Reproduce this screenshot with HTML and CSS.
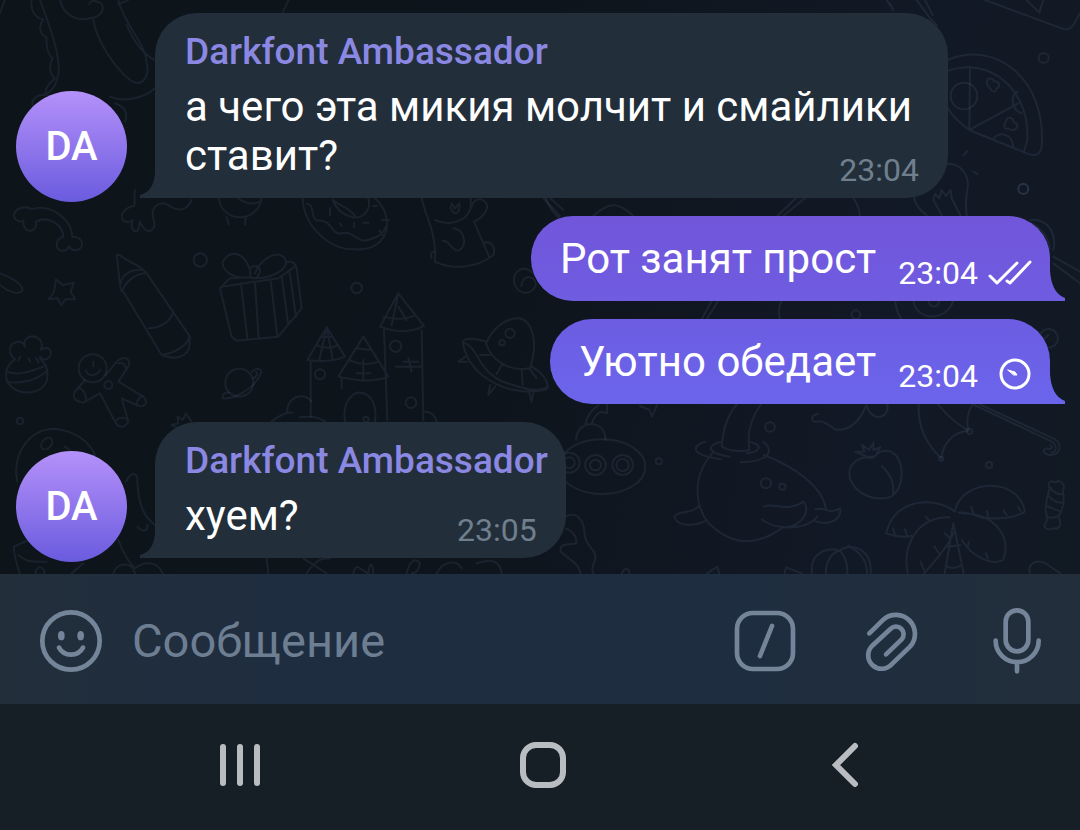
FILE: index.html
```
<!DOCTYPE html>
<html lang="ru">
<head>
  <meta charset="UTF-8">
  <meta name="viewport" content="width=device-width, initial-scale=1.0">
  <title>Чат</title>
  <link rel="stylesheet" href="styles.css">
</head>
<body>

<main class="chat">
  <!-- wallpaper -->
  <svg class="wallpaper" viewBox="0 0 1080 574" preserveAspectRatio="xMidYMid slice" aria-hidden="true">
    <!-- top left: beads, carrot -->
    <g transform="scale(.3333)">
      <path d="M95 0C90 30 105 55 130 58M120 0C150 80 190 190 172 235C165 265 150 280 130 285M130 58C112 80 122 108 140 112C138 140 145 165 158 175C145 200 150 225 165 235C150 250 130 265 140 285C110 280 90 300 100 320M0 40L14 0"/>
      <path d="M180 0C190 45 230 65 270 55C300 52 315 30 305 12C290 0 270 0 268 12M280 60C290 120 340 200 390 240C425 265 450 230 440 190C438 130 370 70 355 0M355 12L385 0M380 75C400 120 430 165 465 180M330 290C370 308 430 295 465 265M345 310C375 320 385 340 375 365"/>
      <path d="M848 38L866 0"/>
    </g>
    <!-- left: rainbow, pen, gift, star, cake, gingerbread man, planet -->
    <g transform="translate(0 190) scale(.3333)">
      <path d="M95 58C75 45 45 55 42 75C42 92 60 98 70 92C68 110 78 124 90 122C105 122 110 108 108 95C145 75 190 105 190 140C170 145 165 165 175 178C190 188 205 178 207 168C215 185 235 185 245 170C250 150 235 138 217 142C215 85 150 40 95 58Z"/>
      <path d="M405 0C400 20 408 35 402 48C380 50 362 70 366 85C372 100 388 98 398 90C390 110 398 125 410 124C420 118 415 105 420 95C430 120 445 128 455 120C470 110 462 95 460 85C450 50 480 30 505 45C530 65 560 65 575 30"/>
      <path d="M656 24C660 60 690 82 720 82C755 82 782 55 785 24M715 24C735 42 760 45 780 35M680 82L686 104M737 82L735 104"/>
      <path d="M350 195L362 300L372 308L485 495C520 510 560 505 568 470L570 440L440 250L430 240C410 220 380 215 360 195ZM362 280C365 255 395 235 425 240M368 300C380 270 410 250 440 250M445 415C480 415 510 395 518 370M485 495C520 490 560 470 568 440"/>
      <circle cx="601" cy="210" r="20"/><circle cx="60" cy="693" r="10"/>
      <path d="M660 295L690 265L750 262M660 295L695 440L710 452L835 440L905 355L890 235C885 215 870 212 858 218M665 290L835 265L885 230M750 262C700 270 665 240 668 215C690 180 730 180 750 240M765 250C780 210 830 175 855 205C870 235 820 265 765 265M750 235C760 225 775 225 780 238C780 260 765 270 752 262ZM723 280L742 445M765 275L776 445M812 270L832 440M845 258L865 405M868 240L888 380"/>
      <path d="M0 250C30 260 65 280 68 300C60 315 30 310 0 285"/>
      <path d="M168 268L188 285L222 278L212 305L226 328L196 328L184 346L173 325L146 328L162 306Z"/>
      <path d="M45 508C25 495 25 465 45 458C60 450 72 460 75 470C65 440 100 430 120 450C128 460 125 475 122 480C145 465 155 480 152 495C145 512 130 512 120 500M45 508C10 530 10 575 40 595C80 620 135 605 142 565C145 535 135 520 120 505M20 545C60 560 100 540 130 530M20 575C70 585 115 565 138 545M60 500l-5 12M85 505l6 12M108 505l8 12"/>
      <circle cx="278" cy="535" r="42"/><circle cx="325" cy="585" r="12"/>
      <path d="M318 555L350 515C370 495 390 505 388 525L355 575L430 620C450 640 430 655 410 645L365 625L385 695C375 715 355 715 345 695L300 610L250 638C225 635 215 620 225 605L255 570M355 520C365 515 380 525 378 540M410 645C410 630 420 620 430 618M345 695C355 682 370 680 382 688M235 590C250 600 260 615 258 630M258 540C260 560 290 560 300 540M280 515v15"/>
      <circle cx="718" cy="578" r="42"/>
      <path d="M755 545C775 530 790 540 782 552C765 595 700 630 668 625C665 615 675 605 688 608M760 565C770 560 775 550 768 546"/>
      <path d="M530 712L515 705L535 700L533 680L548 690L558 670L575 695"/>
      <path d="M862 670C855 625 910 600 935 635M815 695C840 675 860 665 878 668"/>
    </g>
    <!-- donut, koala, castle, ufo -->
    <g transform="translate(300 180) scale(.3333)">
      <path d="M8 54C10 130 80 210 165 208C195 210 220 205 240 185C275 150 265 90 225 54M20 72C45 70 30 115 52 122C100 118 90 165 125 160C160 150 170 190 205 180C230 170 245 170 258 140M98 58C105 80 125 105 160 112C190 115 215 90 205 54M100 62C125 80 150 85 165 108M245 120h22M238 152l12 16M190 128h16M220 78h12M90 85v20M162 128v14M120 130l5 8"/>
      <path d="M365 54C375 110 410 150 405 245C455 270 530 265 580 225C590 195 565 180 550 190L522 125C555 110 570 80 555 65C540 50 520 60 515 80M405 120C450 140 500 125 512 85V54M550 190L568 232M395 235C390 215 400 210 407 220M460 145C500 150 500 205 475 212C450 210 450 180 428 182M455 70L465 85L478 70C480 90 475 100 465 100C455 95 450 85 455 70Z"/>
      <circle cx="170" cy="324" r="16"/>
      <path d="M22 540L80 442L135 530C100 545 60 545 22 540ZM32 545V710M125 595V625M115 590L190 470L265 590C210 610 160 600 115 590ZM240 440L295 340L372 438C330 460 280 455 240 440ZM252 450L262 720M365 450L370 720M48 495C70 505 95 505 115 495M62 470L98 472M80 442L98 538M80 442L58 540M148 540C180 555 210 555 238 545M168 505L215 510M190 540V598M170 580H212M250 410C280 418 320 420 345 405M295 340L275 435M295 380L320 420M288 560H362M310 545H355M325 535L335 575"/>
      <path d="M135 724C125 665 160 635 182 638C215 640 232 680 225 724M0 712C30 708 55 710 75 724M375 695C395 695 405 705 410 724"/>
      <circle cx="60" cy="583" r="15"/><circle cx="287" cy="499" r="17"/><circle cx="333" cy="668" r="16"/><circle cx="198" cy="718" r="8"/>
      <path d="M558 490C580 440 620 415 655 415C700 420 715 490 690 565C630 575 575 545 558 490ZM558 485C530 475 490 470 488 488C510 600 640 655 740 628C750 610 730 580 695 560M490 488C540 500 530 590 640 615C680 630 720 635 745 620M540 525H570M608 550L590 582M665 568L668 615M690 568L710 595M500 528L475 545L502 545M570 615L565 645L585 620M688 640L695 665L700 640"/>
      <circle cx="630" cy="460" r="14"/><circle cx="606" cy="488" r="8"/>
      <path d="M700 280C670 250 640 275 642 305C650 345 695 350 708 315C705 285 670 280 664 318M738 54C745 80 765 105 780 115"/>
    </g>
    <!-- pizza, bulb -->
    <g transform="translate(880) scale(.3333)">
      <path d="M204 180C340 120 500 230 485 440C480 470 460 468 440 460L268 390C240 370 215 345 204 325M204 212C320 170 450 260 442 420L432 455M270 200L268 390L415 310M340 418C350 395 395 395 400 440M425 340C395 330 390 290 412 275"/>
      <circle cx="252" cy="288" r="40"/><circle cx="491" cy="174" r="15"/><circle cx="430" cy="567" r="15"/>
      <path d="M322 240C315 255 330 260 332 268C340 282 350 272 350 265C365 260 355 240 342 245C340 235 325 232 322 240ZM380 360C375 370 368 375 375 385C390 385 395 395 405 388C418 380 412 368 402 368C400 350 380 350 380 360Z"/>
      <path d="M315 0L545 85C560 92 575 85 580 75L600 40M440 0L478 38L490 0M262 453L250 466M280 515L292 522M204 492C245 490 270 530 262 570C255 600 258 625 260 648M102 590C105 620 125 635 140 645M185 645L160 600L165 582L178 595L185 570L198 588L212 570L215 595L242 648M20 0L40 30M40 30L30 10M110 0L150 55L170 75M135 0L158 45"/>
    </g>
    <!-- right side between the outgoing messages -->
    <g transform="translate(720 180) scale(.3333)">
      <path d="M172 108L228 54M190 108L255 54M400 54C415 75 418 90 420 108M930 120C985 115 1010 160 1000 210M935 130C975 150 985 180 990 205M1000 230L1080 275M1000 250L1080 310M185 362C175 380 175 400 180 418M525 362C528 385 535 405 545 418M580 362C590 425 680 425 700 362M625 362C630 385 655 385 658 362M-25 362L-55 418M-5 362L-40 418"/>
      <circle cx="910" cy="26" r="15"/><circle cx="408" cy="404" r="13"/><circle cx="986" cy="475" r="28"/><path d="M975 475L985 465"/>
      <path d="M-530 54L-480 108M-510 54L-470 90M-380 108C-330 60 -300 70 -260 108"/>
    </g>
    <!-- bottom right: submarine, whale, peach, palm, umbrella, candy -->
    <g transform="translate(540 400) scale(.3444 .3333)">
      <ellipse cx="180" cy="200" rx="126" ry="82"/>
      <circle cx="85" cy="188" r="30"/><circle cx="85" cy="188" r="16"/><circle cx="161" cy="195" r="30"/><circle cx="161" cy="195" r="16"/><circle cx="240" cy="195" r="30"/><circle cx="240" cy="195" r="18"/>
      <path d="M105 120C105 85 130 72 150 72C178 74 190 95 190 120M132 72C135 50 150 30 170 15M150 72C155 55 165 40 178 35L195 40V12M290 18L318 30L325 50L340 15"/>
      <circle cx="345" cy="184" r="9"/><circle cx="668" cy="81" r="14"/><circle cx="1304" cy="195" r="9"/>
      <path d="M572 12C540 50 530 100 528 140C550 155 590 155 608 150C600 100 615 50 642 12M528 125C480 135 485 160 550 170M608 125C650 135 640 155 600 160M480 125C435 140 440 165 525 178M648 125C680 150 670 185 582 187M500 160C440 230 450 320 490 370C570 450 640 430 705 382C760 385 790 370 805 350M650 165C740 200 820 260 830 325M462 318C440 345 400 330 390 350C395 380 450 380 482 362M800 328C830 320 835 345 872 325C875 360 840 380 795 362M650 320C680 305 710 340 765 305C785 330 765 375 715 382C690 380 660 375 645 358"/>
      <circle cx="656" cy="250" r="15"/><circle cx="704" cy="260" r="9"/>
      <path d="M965 175C925 165 890 195 900 235C920 290 980 305 1020 290C1060 260 1060 180 1020 155C1000 148 985 155 975 165M992 198C1020 225 1030 255 1025 285M950 170L915 155L942 155L935 135L955 150L968 128L968 150L988 142L972 170Z"/>
      <path d="M808 42C780 45 790 70 805 65C820 60 840 75 855 88C900 95 930 60 948 15C955 45 980 60 1000 45C1010 35 1010 20 1008 12"/>
      <path d="M1100 12C1095 80 1120 130 1165 175C1170 130 1200 95 1245 92C1235 65 1245 30 1255 15M1155 12C1180 45 1215 75 1245 92M1255 12L1480 122C1500 130 1505 155 1485 158M1275 12L1490 115C1520 130 1510 165 1485 165C1465 165 1455 150 1470 145C1485 150 1490 145 1482 135"/>
      <circle cx="1247" cy="94" r="8"/><circle cx="1165" cy="176" r="6"/>
      <path d="M1205 335C1150 290 1030 290 1005 400C1030 410 1055 412 1080 408M1205 330C1230 235 1390 230 1408 335C1370 360 1290 360 1262 345C1245 340 1230 335 1215 338M1190 352C1100 350 1050 430 1068 520M1225 340C1320 340 1370 410 1345 480C1310 500 1250 465 1225 420M1200 370L1175 520M1200 370L1230 520M1200 400C1180 450 1140 490 1115 520M1185 440L1220 435M1183 500C1200 510 1215 500 1225 495M1145 440L1162 465M1105 485L1115 510M1175 400L1190 415M1245 425L1242 440M1295 460L1300 475M1252 320L1260 345M1298 332L1300 348M1345 330L1355 345M1388 320L1395 332M1120 350L1130 362M1060 388L1065 405M1025 385L1030 402"/>
      <path d="M1480 265C1470 245 1485 240 1495 248C1510 235 1528 255 1518 272C1525 300 1518 330 1505 350C1515 370 1510 390 1490 385C1475 392 1458 385 1468 368C1480 350 1470 355 1468 330C1470 300 1475 280 1480 265M1482 262C1490 280 1510 285 1520 282M1478 290C1490 305 1510 310 1520 308M1472 318C1485 325 1500 330 1512 335M1470 350C1485 355 1500 352 1508 345"/>
      <path d="M790 520C780 450 850 440 870 452C900 425 965 445 960 520M830 520C830 480 850 455 870 452C885 465 895 495 892 520M895 438C930 455 950 485 950 520M75 350C110 330 130 365 130 410C140 450 165 445 160 480C150 500 150 510 155 520M75 385C90 390 110 410 105 430C80 435 55 430 60 455C100 490 110 490 118 520M238 520C245 500 260 505 260 520M485 520L515 500L520 520M710 520L715 502L760 520M1422 520C1415 485 1450 475 1475 495L1510 520"/>
    </g>
    <!-- bottom left: balloon, leaf, boots -->
    <g transform="translate(0 410) scale(.3333)">
      <path d="M52 215C35 130 90 55 165 57C230 62 270 100 285 135M378 215C395 180 415 190 412 215C415 280 430 320 465 345M412 350C430 370 445 360 442 345M85 390L42 410C40 440 55 470 60 495M55 435C85 460 100 455 140 455M355 390C370 430 390 460 405 475C430 455 470 450 488 490M340 490C350 455 400 455 405 490M215 490L250 460M195 110L210 120"/>
      <ellipse cx="140" cy="101" rx="20" ry="14" transform="rotate(-50 140 101)"/><circle cx="120" cy="485" r="13"/>
      <path d="M800 445L805 490M920 490C950 445 970 445 990 445M910 445L980 490M1060 490C1070 450 1085 485 1105 490C1110 450 1120 460 1120 490M1220 490C1230 445 1250 445 1260 460C1255 490 1240 490 1235 490M1310 490C1330 450 1370 450 1385 475M1430 460C1470 445 1500 450 1505 490"/>
    </g>
  </svg>

  <article class="row row-in">
    <div class="avatar">DA</div>
    <div class="bubble bubble-in">
      <h2 class="sender">Darkfont Ambassador</h2>
      <p class="text">а чего эта микия молчит и смайлики ставит?<time class="time">23:04</time></p>
      <svg class="tail" viewBox="0 0 15 30"><path d="M15 5C14 17 10 24 0 27V30H15Z"/></svg>
    </div>
  </article>

  <article class="row row-out">
    <div class="bubble bubble-out">
      <p class="text">Рот занят прост</p>
      <div class="meta">
        <time>23:04</time>
        <svg class="status" viewBox="0 0 44 38" role="img" aria-label="Прочитано"><path d="M2 22L9 29L29 9M19 27L22 29L42 8"/></svg>
      </div>
      <svg class="tail" viewBox="0 0 15 30"><path d="M0 0C1 13 5 23 15 27V30H0Z"/></svg>
    </div>
  </article>

  <article class="row row-out">
    <div class="bubble bubble-out bubble-last">
      <p class="text">Уютно обедает</p>
      <div class="meta">
        <time>23:04</time>
        <svg class="status" viewBox="0 0 44 38" role="img" aria-label="Отправляется"><circle cx="27" cy="17" r="14"/><path class="hand" d="M20 13L27 15L29 18L26 18Z"/></svg>
      </div>
      <svg class="tail" viewBox="0 0 15 30"><path d="M0 0C1 13 5 23 15 27V30H0Z"/></svg>
    </div>
  </article>

  <article class="row row-in">
    <div class="avatar">DA</div>
    <div class="bubble bubble-in">
      <h2 class="sender">Darkfont Ambassador</h2>
      <p class="text">хуем?<time class="time">23:05</time></p>
      <svg class="tail" viewBox="0 0 15 30"><path d="M15 5C14 17 10 24 0 27V30H15Z"/></svg>
    </div>
  </article>
</main>

<form class="composer">
  <button type="button" class="icon-btn" aria-label="Эмодзи">
    <svg viewBox="0 0 186 186"><circle cx="93" cy="93" r="86"/><path d="M57 113C72 141 114 141 129 113"/><ellipse class="eye" cx="64" cy="77" rx="10" ry="14"/><ellipse class="eye" cx="122" cy="77" rx="10" ry="14"/></svg>
  </button>
  <input class="message-input" type="text" placeholder="Сообщение" aria-label="Сообщение">
  <button type="button" class="icon-btn" aria-label="Команды">
    <svg viewBox="0 0 186 186"><rect x="9" y="9" width="168" height="168" rx="48"/><path d="M114 48L78 138"/></svg>
  </button>
  <button type="button" class="icon-btn" aria-label="Прикрепить">
    <svg viewBox="0 0 186 186"><path d="M28 70L70 29A57 57 0 0 1 150 110L94 164A40 40 0 0 1 36 108L92 56A23 23 0 0 1 125 88L78 133"/></svg>
  </button>
  <button type="button" class="icon-btn" aria-label="Голосовое сообщение">
    <svg viewBox="0 0 186 186"><rect x="59" y="1" width="68" height="123" rx="34"/><path d="M29 92A64 64 0 0 0 158 92M93 157V184"/></svg>
  </button>
</form>

<nav class="navbar">
  <button type="button" class="nav-btn" aria-label="Недавние"><svg viewBox="0 0 62 62"><path d="M14 13V49M31 13V49M48 13V49"/></svg></button>
  <button type="button" class="nav-btn" aria-label="Домой"><svg viewBox="0 0 62 62"><rect x="11" y="11" width="40" height="40" rx="13"/></svg></button>
  <button type="button" class="nav-btn" aria-label="Назад"><svg viewBox="0 0 62 62"><path d="M40 12L21 31L40 50"/></svg></button>
</nav>

</body>
</html>
```
FILE: styles.css
```
*{
  box-sizing: border-box;
  margin: 0;
  padding: 0;
}
body{
  min-height: 100vh;
  display: flex;
  flex-direction: column;
  background: #161e26;
  font-family: Roboto, "Noto Sans", sans-serif;
  color: #fff;
}
button{
  background: none;
  border: none;
  cursor: pointer;
}

/* messages */
.chat{
  position: relative;
  flex: 1;
  display: flex;
  flex-direction: column;
  justify-content: flex-end;
  gap: 18px;
  padding: 13px 30px 16px 16px;
  overflow: hidden;
  background: linear-gradient(100deg, #0d141a 0%, #0e141b 45%, #121926 80%, #111923 100%);
}
.wallpaper{
  position: absolute;
  inset: 0;
  width: 100%;
  height: 100%;
  fill: none;
  stroke: rgba(130, 155, 195, 0.11);
  stroke-width: 2;
  stroke-linecap: round;
  stroke-linejoin: round;
}
.wallpaper *{
  vector-effect: non-scaling-stroke;
}
.row{
  position: relative;
  display: flex;
  align-items: flex-end;
}
.row-in{
  gap: 28px;
  padding-right: 102px;
}
.row-out{
  justify-content: flex-end;
}
.avatar{
  flex: none;
  width: 111px;
  height: 111px;
  margin-bottom: -4px;
  border-radius: 50%;
  background: linear-gradient(#b591fa, #6a5bde);
  font-size: 40px;
  font-weight: 500;
  line-height: 111px;
  text-align: center;
}
.bubble{
  position: relative;
  padding: 18px 18px 18px 30px;
  border-radius: 42px;
}
.bubble-in{
  padding-top: 17px;
  border-bottom-left-radius: 0;
  background: #222e39;
  color: #222e39;
}
.bubble-out{
  display: flex;
  gap: 22px;
  padding-left: 29px;
  border-bottom-right-radius: 0;
  background: linear-gradient(#7156da, #6f5ce1);
  color: #6f5ce1;
}
.bubble-last{
  background: linear-gradient(#6c5de2, #6b65ec);
  color: #6b65ec;
}
.tail{
  position: absolute;
  bottom: 0;
  width: 15px;
  height: 30px;
  fill: currentColor;
}
.bubble-in .tail{
  right: 100%;
}
.bubble-out .tail{
  left: 100%;
}
.sender{
  margin-bottom: 8px;
  font-size: 37px;
  font-weight: 500;
  line-height: 44px;
  color: #8b88e3;
}
.text{
  font-size: 42px;
  line-height: 49px;
  color: #fff;
}
.time{
  float: right;
  margin: 20px 11px -20px 0;
  font-size: 32px;
  line-height: 38px;
  color: #6f7f8d;
}
.meta{
  display: flex;
  gap: 10px;
  margin: 20px 0 -20px;
  font-size: 32px;
  line-height: 38px;
  color: #fff;
}
.status{
  width: 44px;
  height: 38px;
  fill: none;
  stroke: #fff;
  stroke-width: 3;
  stroke-linecap: round;
  stroke-linejoin: round;
}
.status .hand{
  fill: #fff;
  stroke-width: 1;
}

/* message field */
.composer{
  display: flex;
  align-items: center;
  gap: 64px;
  height: 130px;
  padding: 4px 32px 0 40px;
  background: linear-gradient(90deg, #222e3a, #1f2d40 25%, #1f2d40 70%, #222e3a);
}
.icon-btn{
  flex: none;
  width: 62px;
  height: 62px;
}
.icon-btn svg{
  display: block;
  width: 62px;
  height: 62px;
  overflow: visible;
  fill: none;
  stroke: #758599;
  stroke-width: 14;
  stroke-linecap: round;
  stroke-linejoin: round;
}
.icon-btn .eye{
  fill: #758599;
  stroke: none;
}
.message-input{
  flex: 1;
  min-width: 0;
  height: 62px;
  margin-left: -34px;
  padding-bottom: 2px;
  background: none;
  border: none;
  outline: none;
  font-family: inherit;
  font-size: 47px;
  color: #fff;
}
.message-input::placeholder{
  color: #6d7e92;
}

/* system buttons */
.navbar{
  display: grid;
  grid-template-columns: repeat(3, 1fr);
  align-items: center;
  justify-items: center;
  height: 126px;
  padding: 0 83px 4px 88px;
  background: #161e26;
}
.nav-btn svg{
  display: block;
  width: 62px;
  height: 62px;
  fill: none;
  stroke: #b9bdc1;
  stroke-width: 6;
  stroke-linecap: round;
}
```
